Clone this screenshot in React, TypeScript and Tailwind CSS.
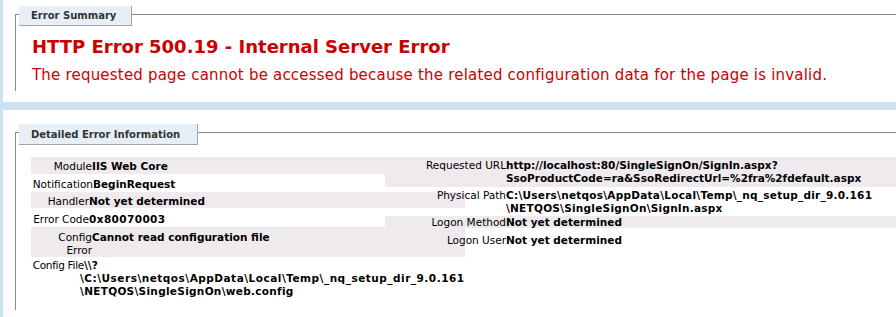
import React from "react";

const SHADE = "bg-[#eeeaee]";

type Line = { text: string; indent: number; track?: number };

function Row({
  h,
  pt,
  shaded,
  thW,
  th,
  thTrack = 0,
  td,
  tdTrack = 0,
  more = [],
}: {
  h: number;
  pt: number;
  shaded?: boolean;
  thW: number;
  th: React.ReactNode;
  thTrack?: number;
  td: string;
  tdTrack?: number;
  more?: Line[];
}) {
  return (
    <div
      className={`${shaded ? SHADE : ""} leading-[13px]`}
      style={{ height: h, paddingTop: pt }}
    >
      <div className="flex items-start whitespace-nowrap">
        <div className="shrink-0 text-right" style={{ width: thW, letterSpacing: thTrack }}>
          {th}
        </div>
        <div className="font-bold" style={{ letterSpacing: tdTrack }}>
          {td}
        </div>
      </div>
      {more.map((l, i) => (
        <div
          key={i}
          className="font-bold whitespace-nowrap"
          style={{ paddingLeft: l.indent, letterSpacing: l.track ?? 0 }}
        >
          {l.text}
        </div>
      ))}
    </div>
  );
}

function Legend({ w, h, mt, children }: { w: number; h: number; mt: number; children: React.ReactNode }) {
  return (
    <div
      className="ml-[3px] bg-[#e6eef6] border-r border-b border-[#a3a3a3] pl-[12px] flex items-center text-[10px] font-bold text-[#333333]"
      style={{ width: w, height: h, marginTop: mt }}
    >
      {children}
    </div>
  );
}

export default function App() {
  return (
    <div className="w-[896px] h-[317px] overflow-hidden bg-[#cde2f0] font-['DejaVu_Sans',Verdana,sans-serif] text-black">
      <div className="w-[1000px]">
        {/* Summary panel */}
        <div className="ml-[3px] bg-white h-[102px] pt-[14px] pl-[12px]">
          <div className="border-l border-t border-[#8a8a8a] h-[77px]">
            <Legend w={113} h={20} mt={-9}>
              Error Summary
            </Legend>
            <div className="pl-[16px] mt-[10px] text-[#cc0000]">
              <div className="text-[18px] leading-[22px] font-bold">
                HTTP Error 500.19 - Internal Server Error
              </div>
              <div className="mt-[8px] text-[15px] leading-[18px] tracking-[0.2px]">
                The requested page cannot be accessed because the related configuration data for the page is invalid.
              </div>
            </div>
          </div>
        </div>

        {/* Details panel */}
        <div className="ml-[3px] mt-[8px] bg-white h-[220px] pt-[22px] pl-[12px]">
          <div className="border-l border-t border-[#8a8a8a] h-[178px]">
            <Legend w={179} h={21} mt={-9}>
              Detailed Error Information
            </Legend>
            <div className="pl-[15px] mt-[12px] text-[10.5px]">
              <div className="grid grid-cols-[354px_80px_1fr]">
                <div className="col-start-1 col-end-3 row-start-1">
                  <Row h={17} pt={3} shaded thW={61} th="Module" td="IIS Web Core" />
                  <Row h={18} pt={4} thW={62} th="Notification" td="BeginRequest" />
                  <Row h={16} pt={3} shaded thW={58} th="Handler" td="Not yet determined" />
                  <Row h={19} pt={5} thW={58} th="Error Code" td="0x80070003" tdTrack={0.4} />
                  <Row
                    h={30}
                    pt={4}
                    shaded
                    thW={61}
                    th={
                      <>
                        <div>Config</div>
                        <div>Error</div>
                      </>
                    }
                    td="Cannot read configuration file"
                  />
                  <Row
                    h={45}
                    pt={2}
                    thW={53}
                    th="Config File"
                    thTrack={-0.3}
                    td={"\\\\?"}
                    more={[
                      {
                        text: "\\C:\\Users\\netqos\\AppData\\Local\\Temp\\_nq_setup_dir_9.0.161",
                        indent: 49,
                        track: 0.5,
                      },
                      { text: "\\NETQOS\\SingleSignOn\\web.config", indent: 49, track: 0.3 },
                    ]}
                  />
                </div>
                <div className="col-start-2 col-end-4 row-start-1">
                  <Row
                    h={30}
                    pt={2}
                    shaded
                    thW={121}
                    th="Requested URL"
                    td="http://localhost:80/SingleSignOn/SignIn.aspx?"
                    more={[{ text: "SsoProductCode=ra&SsoRedirectUrl=%2fra%2fdefault.aspx", indent: 121 }]}
                  />
                  <Row
                    h={29}
                    pt={2}
                    thW={121}
                    th="Physical Path"
                    td={"C:\\Users\\netqos\\AppData\\Local\\Temp\\_nq_setup_dir_9.0.161"}
                    tdTrack={0.25}
                    more={[{ text: "\\NETQOS\\SingleSignOn\\SignIn.aspx", indent: 121, track: 0.25 }]}
                  />
                  <Row h={12} pt={0} shaded thW={121} th="Logon Method" td="Not yet determined" />
                  <Row h={20} pt={6} thW={121} th="Logon User" td="Not yet determined" />
                </div>
              </div>
            </div>
          </div>
        </div>
      </div>
    </div>
  );
}
